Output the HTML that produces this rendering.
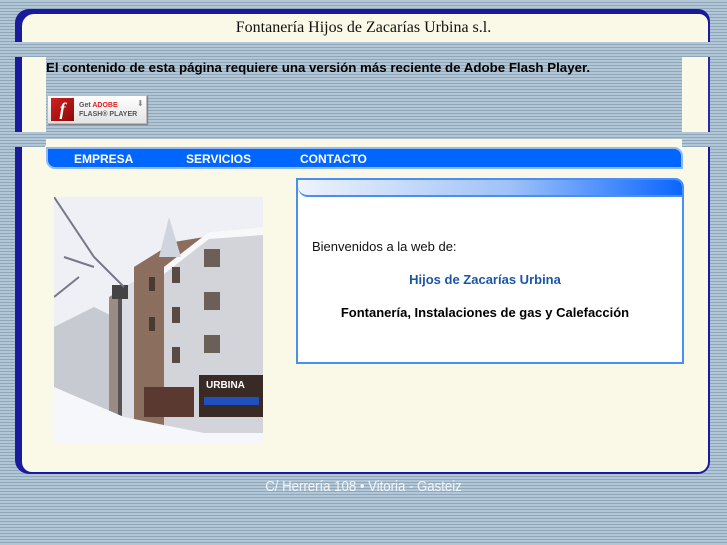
<!DOCTYPE html>
<html><head><meta charset="utf-8"><style>
*{margin:0;padding:0;box-sizing:border-box}
body{width:727px;height:545px;overflow:hidden;position:relative;font-family:"Liberation Sans",sans-serif;
background:repeating-linear-gradient(180deg,#b3c6d6 0,#b3c6d6 2px,#8ea7bb 2px,#8ea7bb 3px)}
.a{position:absolute}
.cream{background:#faf8e6}
.nav{left:46px;top:147px;width:637px;height:22px;background:#0066ff;border:2px solid #8fbaf9;border-radius:0 9px 0 9px;box-shadow:0 0 0 1px #faf8e6}
.nav span{position:absolute;top:3px;color:#fff;font-weight:bold;font-size:12px}
</style></head><body>
<div class="a" style="left:15px;top:9px;width:695px;height:33px;background:#1a1a9c;border-radius:14px 12px 0 0"></div>
<div class="a cream" style="left:22px;top:14px;width:686px;height:28px;border-radius:12px 9px 0 0"></div>
<div class="a" style="left:0;top:15px;width:727px;height:26px;text-align:center;font-family:'Liberation Serif',serif;font-size:16px;color:#111;line-height:26px">Fontanería Hijos de Zacarías Urbina s.l.</div>
<div class="a" style="left:15px;top:57px;width:7px;height:75px;background:#1a1a9c"></div>
<div class="a cream" style="left:22px;top:57px;width:24px;height:75px"></div>
<div class="a cream" style="left:682px;top:57px;width:26px;height:75px"></div>
<div class="a" style="left:708px;top:57px;width:2px;height:75px;background:#2a2aa8"></div>
<div class="a" style="left:46px;top:60px;font-size:13.3px;font-weight:bold;color:#000">El contenido de esta página requiere una versión más reciente de Adobe Flash Player.</div>
<div class="a" style="left:47px;top:95px;width:100px;height:29px;background:linear-gradient(#fff,#e4e4e4);border:1px solid #bbb;box-shadow:1px 1px 1px #777">
 <div class="a" style="left:3px;top:2px;width:23px;height:23px;background:linear-gradient(135deg,#d42020,#8a0a0a);color:#fff;font:italic bold 18px 'Liberation Serif',serif;text-align:center;line-height:23px">f</div>
 <div class="a" style="left:31px;top:5px;font-size:7px;font-weight:bold;color:#555;line-height:9px">Get <span style="color:#e02020">ADOBE</span><br>FLASH® PLAYER</div>
 <div class="a" style="left:89px;top:3px;font-size:8px;color:#888">⬇</div>
</div>
<div class="a" style="left:15px;top:147px;width:695px;height:327px;background:#1a1a9c;border-radius:0 0 12px 14px"></div>
<div class="a cream" style="left:22px;top:147px;width:686px;height:325px;border-radius:0 0 10px 10px"></div>
<div class="a cream" style="left:46px;top:139px;width:636px;height:10px"></div>
<div class="a nav"><span style="left:26px">EMPRESA</span><span style="left:138px">SERVICIOS</span><span style="left:252px">CONTACTO</span></div>
<svg class="a" style="left:54px;top:197px" width="209" height="246" viewBox="0 0 209 246">
<rect width="209" height="246" fill="#eef0f6"/>
<path d="M0 246V130l40-20 20 10v126z" fill="#c8cad2"/>
<path d="M55 246V100l50-30 60-30 44-5v211z" fill="#9a8c84"/>
<path d="M65 246V95l45-30v181z" fill="#dcdde2"/>
<path d="M80 246V70l40-25 30-5v206z" fill="#8c6e5e"/>
<path d="M110 246V70l45-35 54-5v216z" fill="#d2d4da"/>
<path d="M110 70l45-35 54-5v8l-54 4-45 35z" fill="#f8f8fb"/>
<path d="M105 60l10-40 12 40z" fill="#d0d4de"/>
<rect x="145" y="178" width="64" height="42" fill="#3a2a26"/>
<text x="152" y="191" font-size="10" font-weight="bold" fill="#fff" font-family="Liberation Sans">URBINA</text>
<rect x="150" y="200" width="55" height="8" fill="#2050c0"/>
<rect x="90" y="190" width="50" height="30" fill="#5a3a30"/>
<rect x="150" y="52" width="16" height="18" fill="#6a6058"/><rect x="150" y="95" width="16" height="18" fill="#6a6058"/><rect x="150" y="138" width="16" height="18" fill="#6a6058"/>
<rect x="118" y="70" width="8" height="16" fill="#5a4a44"/><rect x="118" y="110" width="8" height="16" fill="#5a4a44"/><rect x="118" y="150" width="8" height="16" fill="#5a4a44"/>
<rect x="95" y="80" width="6" height="14" fill="#4a3a34"/><rect x="95" y="120" width="6" height="14" fill="#4a3a34"/>
<rect x="64" y="95" width="4" height="140" fill="#555"/>
<rect x="58" y="88" width="16" height="14" fill="#444"/>
<path d="M0 190l70 30 80 16 59 0v10H0z" fill="#f6f7fb"/>
<path d="M0 0l40 60 30 30M10 60l30 10M0 100l25-20" stroke="#778" stroke-width="2" fill="none"/>
</svg>
<div class="a" style="left:296px;top:178px;width:388px;height:186px;background:#fff;border:2px solid #4a8ef5;border-radius:0 9px 0 0"></div>
<div class="a" style="left:298px;top:180px;width:384px;height:17px;background:linear-gradient(90deg,#eef3fc,#9fc2f8 55%,#0a66ff);border-radius:0 7px 0 10px;border-bottom:2px solid #4a8ef5"></div>
<div class="a" style="left:312px;top:239px;font-size:13px;color:#111">Bienvenidos a la web de:</div>
<div class="a" style="left:298px;top:272px;width:374px;text-align:center;font-size:13px;font-weight:bold;color:#1a56a8">Hijos de Zacarías Urbina</div>
<div class="a" style="left:298px;top:305px;width:374px;text-align:center;font-size:13px;font-weight:bold;color:#000">Fontanería, Instalaciones de gas y Calefacción</div>
<div class="a" style="left:0;top:478px;width:727px;text-align:center;font-size:15px;color:#f2f5f8;transform:scaleX(0.88)">C/ Herrería 108 • Vitoria - Gasteiz</div>
</body></html>
